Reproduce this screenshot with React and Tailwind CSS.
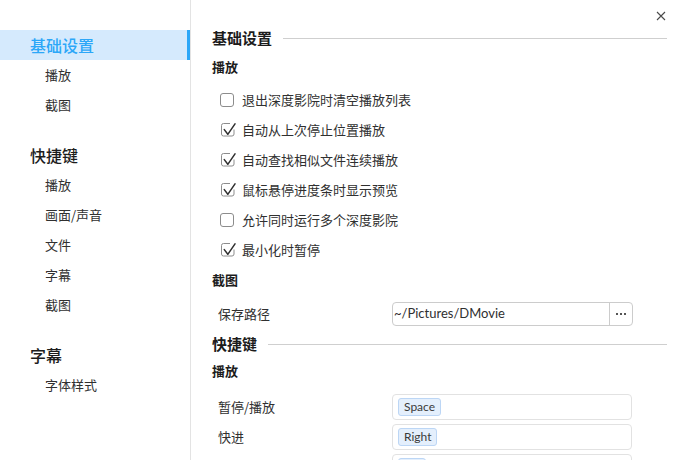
import { useState } from "react";

const sidebar = [
  { title: "基础设置", items: ["播放", "截图"] },
  { title: "快捷键", items: ["播放", "画面/声音", "文件", "字幕", "截图"] },
  { title: "字幕", items: ["字体样式"] },
];

const options = [
  { label: "退出深度影院时清空播放列表", checked: false },
  { label: "自动从上次停止位置播放", checked: true },
  { label: "自动查找相似文件连续播放", checked: true },
  { label: "鼠标悬停进度条时显示预览", checked: true },
  { label: "允许同时运行多个深度影院", checked: false },
  { label: "最小化时暂停", checked: true },
];

// last row is cut off by the window edge, only its box shows
const shortcuts = [
  { label: "暂停/播放", key: "Space" },
  { label: "快进", key: "Right" },
  { label: "", key: "" },
];

function CheckBox({ checked }) {
  if (!checked) {
    return (
      <span className="w-[14px] h-[14px] rounded-[3px] border border-[#8c8c8c] bg-white"></span>
    );
  }
  return (
    <svg width="16" height="16" viewBox="0 0 16 16" fill="none" className="shrink-0">
      <path
        d="M10 1.5H3.5A2 2 0 0 0 1.5 3.5V12A2 2 0 0 0 3.5 14H12A2 2 0 0 0 14 12V7.5"
        stroke="#8c8c8c"
        strokeWidth="1"
      />
      <path
        d="M4.3 7.6L7.8 12.3L15 1.8"
        stroke="#2e2e2e"
        strokeWidth="1.5"
        strokeLinecap="round"
        strokeLinejoin="round"
      />
    </svg>
  );
}

function Heading({ children, className }) {
  return (
    <div className={`h-[20px] flex items-center gap-[11px] ${className || ""}`}>
      <span className="text-[15px] font-bold text-[#1c1c1c]">{children}</span>
      <div className="flex-1 h-px bg-[#cfcfcf]"></div>
    </div>
  );
}

export default function App() {
  const [opts, setOpts] = useState(options);

  return (
    <div
      className="w-[680px] h-[460px] flex bg-white overflow-hidden text-[#303030]"
      style={{ fontFamily: '"Noto Sans CJK SC", "Noto Sans", sans-serif' }}
    >
      {/* SIDEBAR */}
      <div className="w-[191px] shrink-0 border-r border-[#e3e3e3] pt-[30px]">
        {sidebar.map((group, gi) => (
          <div key={gi} className={gi > 0 ? "mt-[20px]" : ""}>
            <div
              className={`h-[30px] flex items-center pl-[30px] text-[16px] font-medium ${
                gi === 0
                  ? "bg-[#d5eafd] text-[#2ca7f8] border-r-[3px] border-[#2ca7f8]"
                  : "text-[#1c1c1c]"
              }`}
            >
              {group.title}
            </div>
            {group.items.map((item, ii) => (
              <div key={ii} className="h-[30px] flex items-center pl-[45px] text-[13px]">
                {item}
              </div>
            ))}
          </div>
        ))}
      </div>

      {/* CONTENT */}
      <div className="flex-1 relative pl-[21px] pr-[13px] pt-[28px]">
        <button className="absolute right-[14px] top-[11px] w-[10px] h-[10px]">
          <svg width="10" height="10" viewBox="0 0 10 10">
            <path d="M1 1L9 9M9 1L1 9" stroke="#4a4a4a" strokeWidth="1.1" />
          </svg>
        </button>

        <Heading>基础设置</Heading>

        <div className="mt-[4px] h-[30px] flex items-center text-[13px] font-bold text-[#1c1c1c]">
          播放
        </div>

        <div className="pt-[3px]">
          {opts.map((o, i) => (
            <div
              key={i}
              onClick={() =>
                setOpts(opts.map((x, j) => (j === i ? { ...x, checked: !x.checked } : x)))
              }
              className="h-[30px] flex items-center pl-[8px] gap-[8px] text-[13px] cursor-default"
            >
              <span className="w-[14px] h-[16px] flex items-center justify-start">
                <CheckBox checked={o.checked} />
              </span>
              {o.label}
            </div>
          ))}
        </div>

        <div className="h-[30px] flex items-center text-[13px] font-bold text-[#1c1c1c]">
          截图
        </div>

        <div className="mt-[7px] h-[24px] flex items-center">
          <div className="w-[180px] pl-[6px] text-[13px]">保存路径</div>
          <div className="w-[241px] h-[24px] flex border border-[#cccccc] rounded-[4px]">
            <div
              className="flex-1 flex items-center pl-[1px] text-[13px] text-[#303030]"
              style={{ fontFamily: 'Lato, "Noto Sans", sans-serif' }}
            >
              ~/Pictures/DMovie
            </div>
            <div className="w-[23px] border-l border-[#cccccc] flex items-center justify-center gap-[2px]">
              <span className="w-[2px] h-[2px] bg-[#555]"></span>
              <span className="w-[2px] h-[2px] bg-[#555]"></span>
              <span className="w-[2px] h-[2px] bg-[#555]"></span>
            </div>
          </div>
        </div>

        <Heading className="mt-[8px]">快捷键</Heading>

        <div className="mt-[2px] h-[30px] flex items-center text-[13px] font-bold text-[#1c1c1c]">
          播放
        </div>

        <div className="mt-[6px]">
          {shortcuts.map((s, i) => (
            <div key={i} className="h-[30px] flex items-center">
              <div className="w-[180px] pl-[6px] text-[13px]">{s.label}</div>
              <div className="w-[240px] h-[26px] flex items-center px-[5px] border border-[#e2e2e2] rounded-[4px]">
                <span
                  className={`h-[18px] flex items-center px-[5px] rounded-[3px] bg-[#e4effc] border border-[#bcd6f5] text-[12px] text-[#3a3a3a] ${
                    s.key ? "" : "w-[28px]"
                  }`}
                  style={{ fontFamily: 'Lato, "Noto Sans", sans-serif' }}
                >
                  {s.key}
                </span>
              </div>
            </div>
          ))}
        </div>
      </div>
    </div>
  );
}
